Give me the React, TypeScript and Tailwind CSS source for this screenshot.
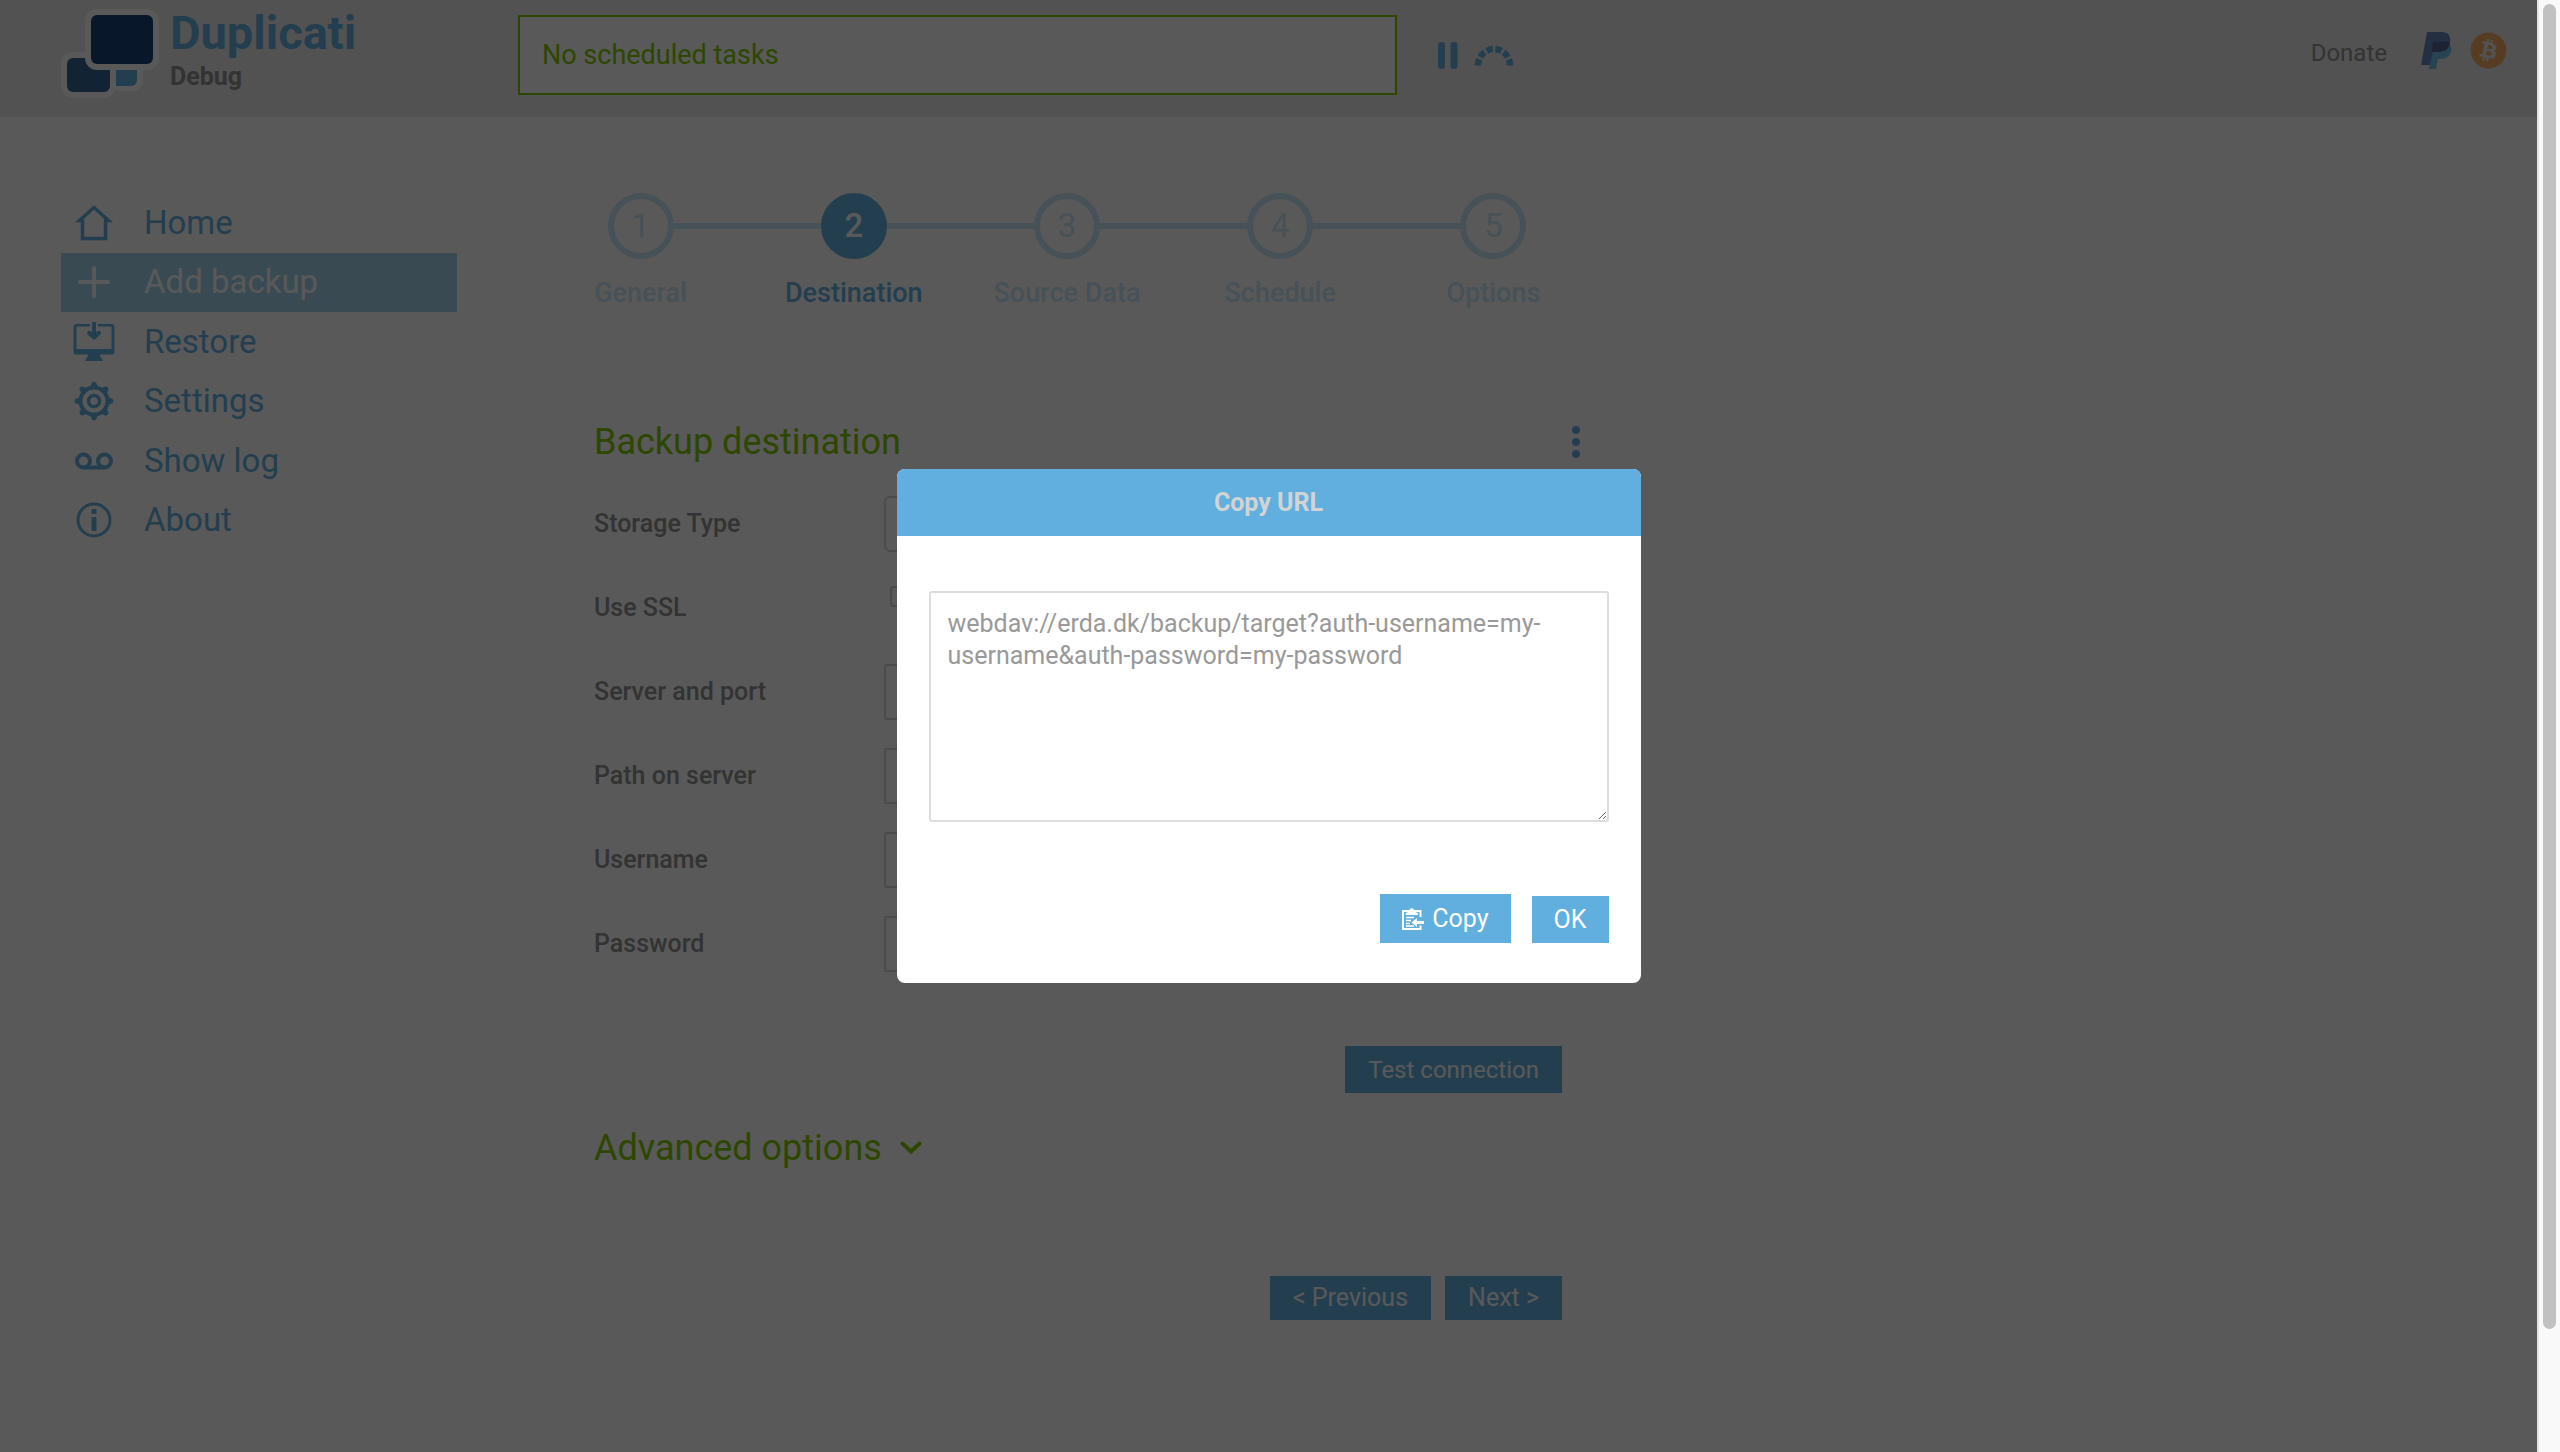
import { useState } from 'react'
import type { ReactNode } from 'react'
import { FaBitcoin } from 'react-icons/fa'

const TARGET_URL = 'webdav://erda.dk/backup/target?auth-username=my-username&auth-password=my-password'

const steps = ['General', 'Destination', 'Source Data', 'Schedule', 'Options']

function Logo() {
  return (
    <svg width="98" height="90" viewBox="0 0 98 90" aria-hidden="true">
      <rect x="48" y="44" width="34" height="38" rx="11" fill="#fff" />
      <path d="M54 60h22v11a6 6 0 0 1-6 6H54z" fill="#66b3e3" />
      <rect x="0" y="43" width="55" height="46" rx="12" fill="#fff" />
      <rect x="6" y="49" width="43" height="34" rx="6" fill="#356694" />
      <rect x="24" y="0" width="74" height="61" rx="12" fill="#fff" />
      <rect x="30" y="6" width="62" height="49" rx="6" fill="#174278" />
    </svg>
  )
}

function HomeIcon() {
  return (
    <svg width="42" height="42" viewBox="0 0 42 42" fill="none" stroke="currentColor" strokeWidth="3.500" aria-hidden="true">
      <path d="M9.500 19v17.500h23V19" />
      <path d="M11 18.500H6.500L21 5.500l14.500 13H31" />
    </svg>
  )
}

function PlusIcon() {
  return (
    <svg width="42" height="42" viewBox="0 0 42 42" fill="none" stroke="currentColor" strokeWidth="4" strokeLinecap="round" aria-hidden="true">
      <path d="M21 7v28M7 21h28" />
    </svg>
  )
}

function RestoreIcon() {
  return (
    <svg width="42" height="42" viewBox="0 0 42 42" fill="currentColor" aria-hidden="true">
      <path d="M3 3h14v2.500H3.500V28h35V5.500H25V3h14a2.500 2.500 0 0 1 2.500 2.500V31a2.500 2.500 0 0 1-2.500 2.500H27c0 3 2 4 3 6.500H12c1-2.500 3-3.500 3-6.500H3A2.500 2.500 0 0 1 .5 31V5.500A2.500 2.500 0 0 1 3 3z" />
      <path d="M19 1h4v10l4-1.500 1 3.500-7 6-7-6 1-3.500 4 1.500z" />
    </svg>
  )
}

function SettingsIcon() {
  return (
    <svg width="42" height="42" viewBox="0 0 42 42" fill="none" stroke="currentColor" aria-hidden="true">
      <circle cx="21" cy="21" r="13.500" strokeWidth="4" />
      <circle cx="21" cy="21" r="5.500" strokeWidth="3.500" />
      <g fill="currentColor" stroke="none">
        {[0, 45, 90, 135, 180, 225, 270, 315].map((deg) => (
          <path key={deg} transform={`rotate(${deg} 21 21)`} d="M14.500 8.500C17 7.500 18 5.500 18.500 3.500 19 1 23 1 23.500 3.500c.5 2 1.500 4 4 5z" />
        ))}
      </g>
    </svg>
  )
}

function LogIcon() {
  return (
    <svg width="42" height="42" viewBox="0 0 42 42" fill="none" stroke="currentColor" strokeWidth="4" aria-hidden="true">
      <circle cx="10.500" cy="21" r="6.500" />
      <circle cx="31.500" cy="21" r="6.500" />
      <path d="M10.500 27.500h21" />
    </svg>
  )
}

function AboutIcon() {
  return (
    <svg width="42" height="42" viewBox="0 0 42 42" aria-hidden="true">
      <circle cx="21" cy="21" r="16" fill="none" stroke="currentColor" strokeWidth="3" />
      <rect x="18.500" y="10" width="5" height="5" rx="1" fill="currentColor" />
      <rect x="18.500" y="18" width="5" height="14" rx="1" fill="currentColor" />
    </svg>
  )
}

function PauseIcon() {
  return (
    <svg width="20" height="28" viewBox="0 0 20 28" fill="currentColor" aria-hidden="true">
      <rect x="0" y="0" width="7" height="27" rx="3" />
      <rect x="12.500" y="0" width="7" height="27" rx="3" />
    </svg>
  )
}

function ThrottleIcon() {
  return (
    <svg width="40" height="24" viewBox="0 0 40 24" fill="none" stroke="currentColor" strokeWidth="6.500" aria-hidden="true">
      <path d="M4 21.500a16 16.500 0 0 1 32 0" strokeDasharray="6.400 2.500" />
    </svg>
  )
}

function PaypalIcon() {
  return (
    <svg width="32" height="38" viewBox="0 0 32 38" aria-hidden="true">
      <path d="M12 13h17c2 3 2 6 0 9-2 4-6 5-12 5l-2 10H8z" fill="#6fc4ea" />
      <path d="M6 0h15c6 0 9 4 8 10-1 7-6 10-13 10h-4l-3 13H0z" fill="#6a86c4" />
      <path d="M12 9.500h17c0 7-5 10.500-12 10.500h-5l-1-1z" fill="#55648f" />
    </svg>
  )
}

function ClipboardIcon() {
  return (
    <svg width="22" height="24" viewBox="0 0 22 24" fill="none" stroke="currentColor" strokeWidth="2" aria-hidden="true">
      <path d="M18.500 10V4H1v18h17.500v-3.500" />
      <path d="M3.500 8c0-2 1-3 3.500-3 0-5 5.500-5 5.500 0 2.500 0 3.500 1 3.500 3z" fill="currentColor" stroke="none" />
      <path d="M4 10.500h8M4 13.500h5M4 16.500h4M4 19h8" strokeWidth="1.500" />
      <path d="M9.500 15.500 15 11v3h7v3h-7v3z" fill="currentColor" stroke="none" />
    </svg>
  )
}

function DotsIcon() {
  return (
    <svg width="8" height="32" viewBox="0 0 8 32" fill="currentColor" aria-hidden="true">
      <circle cx="4" cy="4" r="4" />
      <circle cx="4" cy="16" r="4" />
      <circle cx="4" cy="28" r="4" />
    </svg>
  )
}

const menu = [
  { label: 'Home', icon: <HomeIcon /> },
  { label: 'Add backup', icon: <PlusIcon /> },
  { label: 'Restore', icon: <RestoreIcon /> },
  { label: 'Settings', icon: <SettingsIcon /> },
  { label: 'Show log', icon: <LogIcon /> },
  { label: 'About', icon: <AboutIcon /> },
]

function Header() {
  return (
    <header className="flex h-[117px] items-start bg-[#ebebeb] text-[#929292]">
      <div className="flex w-[518px] shrink-0 pl-[61px] pt-[9px]">
        <Logo />
        <div className="ml-[11px]">
          <h1 className="text-[47px] leading-[48px] font-bold text-[#66b3e3]">Duplicati</h1>
          <div className="mt-1 text-[25px] leading-[32px] font-bold">Debug</div>
        </div>
      </div>
      <div className="mt-[15px] flex h-20 w-[879px] items-center border-2 border-[#81cb00] bg-white px-[22px] text-[27px] text-[#81cb00]">
        No scheduled tasks
      </div>
      <div className="mt-[42px] flex gap-4 pl-[41px] text-[#66b3e3]">
        <button aria-label="Pause"><PauseIcon /></button>
        <button aria-label="Throttle"><ThrottleIcon /></button>
      </div>
      <div className="mt-8 mr-[30px] ml-auto flex items-start">
        <span className="mr-[34px] text-[24px] leading-[42px]">Donate</span>
        <a href="#paypal" aria-label="PayPal" className="mr-[17px]"><PaypalIcon /></a>
        <a href="#bitcoin" aria-label="Bitcoin" className="text-[#f7b063]"><FaBitcoin size={37} /></a>
      </div>
    </header>
  )
}

function Menu({ active }: { active: string }) {
  return (
    <nav className="mt-[76px] ml-[61px] flex h-[357px] w-[396px] shrink-0 flex-col text-[33px] leading-[40px]">
      {menu.map(({ label, icon }) => (
        <a
          key={label}
          href="#menu"
          className={`flex flex-1 items-center gap-[29px] pl-3 ${
            label === active ? 'bg-[#a6d3ea] text-white' : 'text-[#66b3e3]'
          }`}
        >
          {icon}
          {label}
        </a>
      ))}
    </nav>
  )
}

function Steps({ current }: { current: number }) {
  return (
    <ol className="flex text-[#c8e7fb]">
      {steps.map((name, i) => (
        <li key={name} className="flex flex-1 flex-col items-center gap-[18px]">
          <div className="flex w-full items-center">
            <div className={`h-[6px] flex-1 ${i > 0 ? 'bg-[#c8e7fb]' : ''}`} />
            <div
              className={`flex size-[66px] items-center justify-center rounded-full border-[6px] text-[33px] ${
                i === current ? 'border-[#66b3e3] bg-[#66b3e3] font-medium text-white' : 'border-[#c8e7fb]'
              }`}
            >
              {i + 1}
            </div>
            <div className={`h-[6px] flex-1 ${i < steps.length - 1 ? 'bg-[#c8e7fb]' : ''}`} />
          </div>
          <span className={`text-[27px] leading-[32px] font-medium ${i === current ? 'text-[#66b3e3]' : ''}`}>{name}</span>
        </li>
      ))}
    </ol>
  )
}

function Field({ id, label, children }: { id: string; label: string; children: ReactNode }) {
  return (
    <div className="flex h-14 items-center">
      <label htmlFor={id} className="w-[290px] text-[25px] leading-[32px] font-medium text-[#929292]">{label}</label>
      {children}
    </div>
  )
}

const inputClass = 'h-full flex-1 rounded-[2px] border-2 border-[#d8d8d8] bg-white px-4 text-[25px]'
const buttonClass = 'bg-[#66b3e3] px-[23px] text-white'

function DestinationForm() {
  return (
    <form className="mt-[111px] ml-[60px] w-[968px]" onSubmit={(e) => e.preventDefault()}>
      <div className="-mr-[18px] flex items-center justify-between">
        <h2 className="text-[36px] leading-[44px] text-[#81cb00]">Backup destination</h2>
        <button type="button" aria-label="More" className="text-[#66b3e3]"><DotsIcon /></button>
      </div>
      <div className="mt-8 flex flex-col gap-7">
        <Field id="storage" label="Storage Type">
          <select id="storage" className="h-full flex-1 rounded-[6px] border-2 border-[#d8d8d8] bg-white" />
        </Field>
        <Field id="ssl" label="Use SSL">
          <input id="ssl" type="checkbox" className="mt-[6px] ml-[6px] size-[21px] appearance-none self-start rounded-[4px] border-2 border-[#d0d0d0]" />
        </Field>
        <Field id="server" label="Server and port">
          <input id="server" className={inputClass} />
        </Field>
        <Field id="path" label="Path on server">
          <input id="path" className={inputClass} />
        </Field>
        <Field id="username" label="Username">
          <input id="username" className={inputClass} />
        </Field>
        <Field id="password" label="Password">
          <input id="password" type="password" className={inputClass} />
        </Field>
      </div>
      <div className="mt-[74px] flex justify-end">
        <button type="button" className={`h-[47px] text-[24px] ${buttonClass}`}>Test connection</button>
      </div>
      <h2 className="mt-[33px] flex items-center gap-[18px] text-[36px] leading-[44px] text-[#81cb00]">
        Advanced options
        <svg width="22" height="14" viewBox="0 0 22 14" fill="none" stroke="currentColor" strokeWidth="4" strokeLinecap="round" aria-hidden="true">
          <path d="m2.500 2.500 8.500 8 8.500-8" />
        </svg>
      </h2>
      <div className="mt-[106px] flex justify-end gap-[14px]">
        <button type="button" className={`h-[44px] text-[25px] ${buttonClass}`}>&lt; Previous</button>
        <button type="submit" className={`h-[44px] text-[25px] ${buttonClass}`}>Next &gt;</button>
      </div>
    </form>
  )
}

function CopyUrlDialog() {
  const [url, setUrl] = useState(TARGET_URL)

  return (
    <div className="absolute inset-0 flex items-center justify-center bg-black/65">
      <div role="dialog" aria-labelledby="dialog-title" className="w-[744px] overflow-hidden rounded-[8px] bg-white">
        <h3 id="dialog-title" className="bg-[#61afdf] text-center text-[25px] leading-[67px] font-bold text-[#d3d3d3]">Copy URL</h3>
        <div className="px-8 pt-[55px] pb-10">
          <textarea
            aria-label="Backup URL"
            spellCheck={false}
            value={url}
            onChange={(e) => setUrl(e.target.value)}
            className="block h-[231px] w-full rounded-[3px] border-2 border-[#dddddd] px-[17px] py-[15px] text-[25px] leading-[32px] text-[#999999]"
          />
          <div className="mt-[72px] flex items-end justify-end gap-[21px]">
            <button
              onClick={() => navigator.clipboard.writeText(url)}
              className="flex h-[49px] items-center gap-2 bg-[#61afdf] px-[22px] text-[25px] text-white"
            >
              <ClipboardIcon />
              Copy
            </button>
            <button className="h-[47px] bg-[#61afdf] px-[22px] text-[25px] text-white">OK</button>
          </div>
        </div>
      </div>
    </div>
  )
}

export default function App() {
  return (
    <div className="flex h-screen overflow-hidden font-['Roboto',sans-serif]">
      <div className="relative flex-1 bg-white">
        <Header />
        <div className="flex">
          <Menu active="Add backup" />
          <main className="mt-[76px] ml-[77px] w-[1066px]">
            <Steps current={1} />
            <DestinationForm />
          </main>
        </div>
        <CopyUrlDialog />
      </div>
      <div className="w-[23px] shrink-0 border-l-2 border-[#e4e4e4] bg-[#f9f9f9] px-1 pt-1">
        <div className="h-[91.5%] w-[13px] rounded-full bg-[#c1c1c1]" />
      </div>
    </div>
  )
}
